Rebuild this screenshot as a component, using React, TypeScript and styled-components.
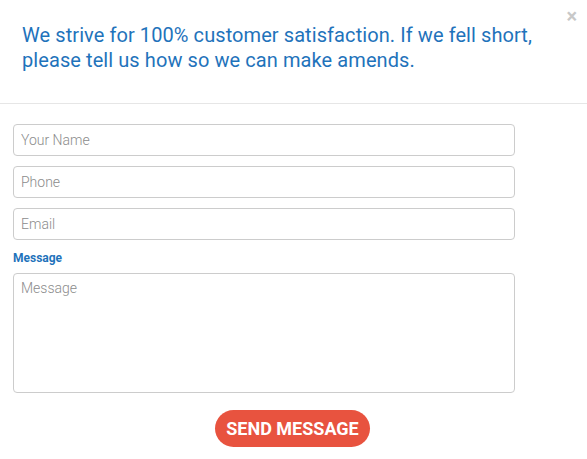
import React from "react";
import styled, { createGlobalStyle } from "styled-components";

const GlobalStyle = createGlobalStyle`
  body {
    margin: 0;
    background: #ffffff;
    font-family: Roboto, "Liberation Sans", sans-serif;
  }
`;

export default function App() {
  return (
    <>
      <GlobalStyle />
      <Wrapper>
        <Header>
          <Close aria-label="close">×</Close>
          <Title>
            We strive for 100% customer satisfaction. If we fell short,
            <br />
            please tell us how so we can make amends.
          </Title>
        </Header>
        <Form onSubmit={(e) => e.preventDefault()}>
          <Input placeholder="Your Name" />
          <Input placeholder="Phone" />
          <Input placeholder="Email" />
          <Label>Message</Label>
          <TextArea placeholder="Message" />
          <ButtonRow>
            <SendButton type="submit">SEND MESSAGE</SendButton>
          </ButtonRow>
        </Form>
      </Wrapper>
    </>
  );
}

const Wrapper = styled.div`
  width: 587px;
  height: 459px;
  background: #ffffff;
  position: relative;
`;

const Header = styled.div`
  padding: 23px 22px 30px;
  border-bottom: 1px solid #e6e6e6;
`;

const Title = styled.h2`
  margin: 0;
  font-size: 20px;
  line-height: 25px;
  letter-spacing: 0.08px;
  font-weight: 400;
  color: #1f73bb;
`;

const Close = styled.span`
  position: absolute;
  top: 4px;
  right: 10px;
  font-size: 20px;
  font-weight: 700;
  color: #c8c8c8;
  cursor: pointer;
`;

const Form = styled.form`
  display: flex;
  flex-direction: column;
  padding: 20px 0 0 13px;
`;

const Input = styled.input`
  box-sizing: border-box;
  width: 502px;
  height: 32px;
  margin-bottom: 10px;
  padding: 0 7px;
  border: 1px solid #cccccc;
  border-radius: 4px;
  font-family: Roboto, "Liberation Sans", sans-serif;
  font-size: 14px;
  color: #333;
  outline: none;

  &::placeholder {
    color: #8c8c8c;
    font-weight: 300;
  }
`;

const Label = styled.label`
  margin-top: 1px;
  margin-bottom: 8px;
  font-size: 12px;
  font-weight: 700;
  color: #1f73bb;
`;

const TextArea = styled.textarea`
  box-sizing: border-box;
  width: 502px;
  height: 120px;
  padding: 6px 7px;
  border: 1px solid #cccccc;
  border-radius: 4px;
  font-family: Roboto, "Liberation Sans", sans-serif;
  font-size: 14px;
  resize: none;
  outline: none;

  &::placeholder {
    color: #8c8c8c;
    font-weight: 300;
  }
`;

const ButtonRow = styled.div`
  display: flex;
  justify-content: center;
  margin-left: -15px;
  padding-top: 17px;
`;

const SendButton = styled.button`
  height: 37px;
  padding: 0 11px;
  border: none;
  border-radius: 19px;
  background: #e8533f;
  color: #ffffff;
  font-family: Roboto, "Liberation Sans", sans-serif;
  font-size: 18px;
  font-weight: 700;
  cursor: pointer;
`;
